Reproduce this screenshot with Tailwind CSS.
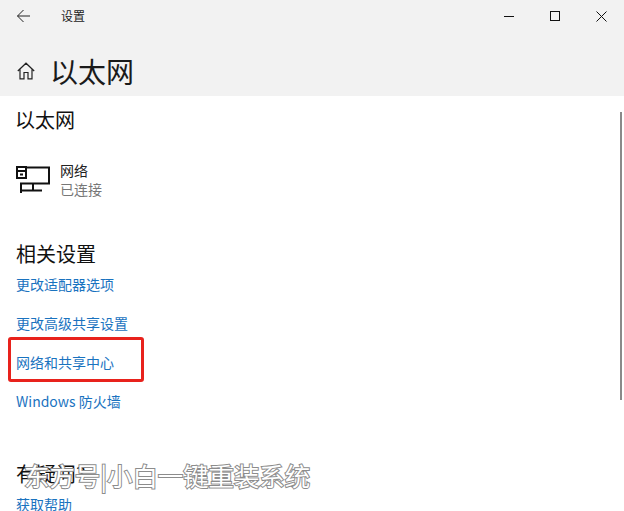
<!DOCTYPE html>
<html lang="zh-CN">
<head>
  <meta charset="UTF-8" />
  <title>设置</title>
  <script src="https://cdn.jsdelivr.net/npm/@tailwindcss/browser@4"></script>
</head>
<body class="bg-white overflow-hidden font-['Noto_Sans_CJK_SC','Noto_Sans',sans-serif]">
  <div class="relative w-[624px] h-[511px] overflow-hidden">
    <!-- title bar + page header -->
    <header class="h-[96px] bg-[#f2f2f2] flex flex-col">
      <div class="h-[32px] flex items-center">
        <svg class="w-[14px] h-[14px] ml-[17px]" viewBox="0 0 14 14" fill="none" stroke="#222" stroke-width="1"><path d="M0.5 7H13M6.5 1L0.5 7L6.5 13"/></svg>
        <span class="ml-[30px] text-[12px] leading-none text-[#222]">设置</span>
        <div class="ml-auto flex items-center">
          <svg class="w-[10px] h-[10px] mr-[36px]" viewBox="0 0 10 10" fill="none" stroke="#111" stroke-width="1"><path d="M0 5.5H10"/></svg>
          <svg class="w-[10px] h-[10px] mr-[36px]" viewBox="0 0 10 10" fill="none" stroke="#111" stroke-width="1"><rect x="0.5" y="0.5" width="9" height="9"/></svg>
          <svg class="w-[11px] h-[11px] mr-[17px]" viewBox="0 0 11 11" fill="none" stroke="#111" stroke-width="1"><path d="M0.5 0.5L10.5 10.5M10.5 0.5L0.5 10.5"/></svg>
        </div>
      </div>
      <div class="flex items-center h-[48px] mt-[15px]">
        <svg class="w-[18px] h-[18px] ml-[17px]" viewBox="0 0 18 18" fill="none" stroke="#222" stroke-width="1.2"><path d="M0.8 9L9 1.2L17.2 9M3 7.5V16.8H7V10.5H11V16.8H15V7.5"/></svg>
        <h1 class="ml-[15px] text-[28px] leading-none text-[#1a1a1a]">以太网</h1>
      </div>
    </header>

    <main class="relative px-[16px]">
      <h2 class="pt-[12px] -ml-[1px] text-[20px] leading-[24px] text-[#111]">以太网</h2>

      <div class="flex items-start mt-[29px]">
        <svg class="w-[34px] h-[27px] mt-[5px]" viewBox="0 0 34 27" fill="none" stroke="#111" stroke-width="2">
          <path d="M8 1.5H33V17.5H5V27"/>
          <rect x="1" y="1" width="9" height="11" fill="#fff"/>
          <path d="M1 5H10M4 8.5H7" />
          <path d="M17 18V24M5 24.5H26"/>
        </svg>
        <div class="ml-[10px]">
          <div class="text-[14px] leading-[19px] text-[#222]">网络</div>
          <div class="text-[14px] leading-[19px] text-[#777]">已连接</div>
        </div>
      </div>

      <h2 class="mt-[43px] text-[20px] leading-[24px] text-[#111]">相关设置</h2>

      <nav class="flex flex-col text-[14px] leading-[20px] text-[#1a73bf]">
        <a class="mt-[8px]">更改适配器选项</a>
        <a class="mt-[19px]">更改高级共享设置</a>
        <a class="mt-[19px]">网络和共享中心</a>
        <a class="mt-[19px]">Windows 防火墙</a>
      </nav>

      <h2 class="mt-[51px] text-[20px] leading-[24px] text-[#111]">有疑问?</h2>
      <a class="block mt-[8px] text-[14px] leading-[20px] text-[#1a73bf]">获取帮助</a>

      <!-- scrollbar -->
      <div class="absolute right-[2px] top-[16px] w-[2px] h-[288px] bg-[#8a8a8a]"></div>
    </main>

    <!-- red annotation box -->
    <div class="absolute left-[8px] top-[337px] w-[136px] h-[45px] border-[3px] border-[#e8221c] rounded-[3px]"></div>

    <!-- watermark -->
    <div class="absolute left-[24px] top-[459px] text-[25.4px] leading-[32px] text-white [-webkit-text-stroke:2px_#8c8c8c] [paint-order:stroke_fill] whitespace-nowrap">东方号|小白一键重装系统</div>
  </div>
</body>
</html>
